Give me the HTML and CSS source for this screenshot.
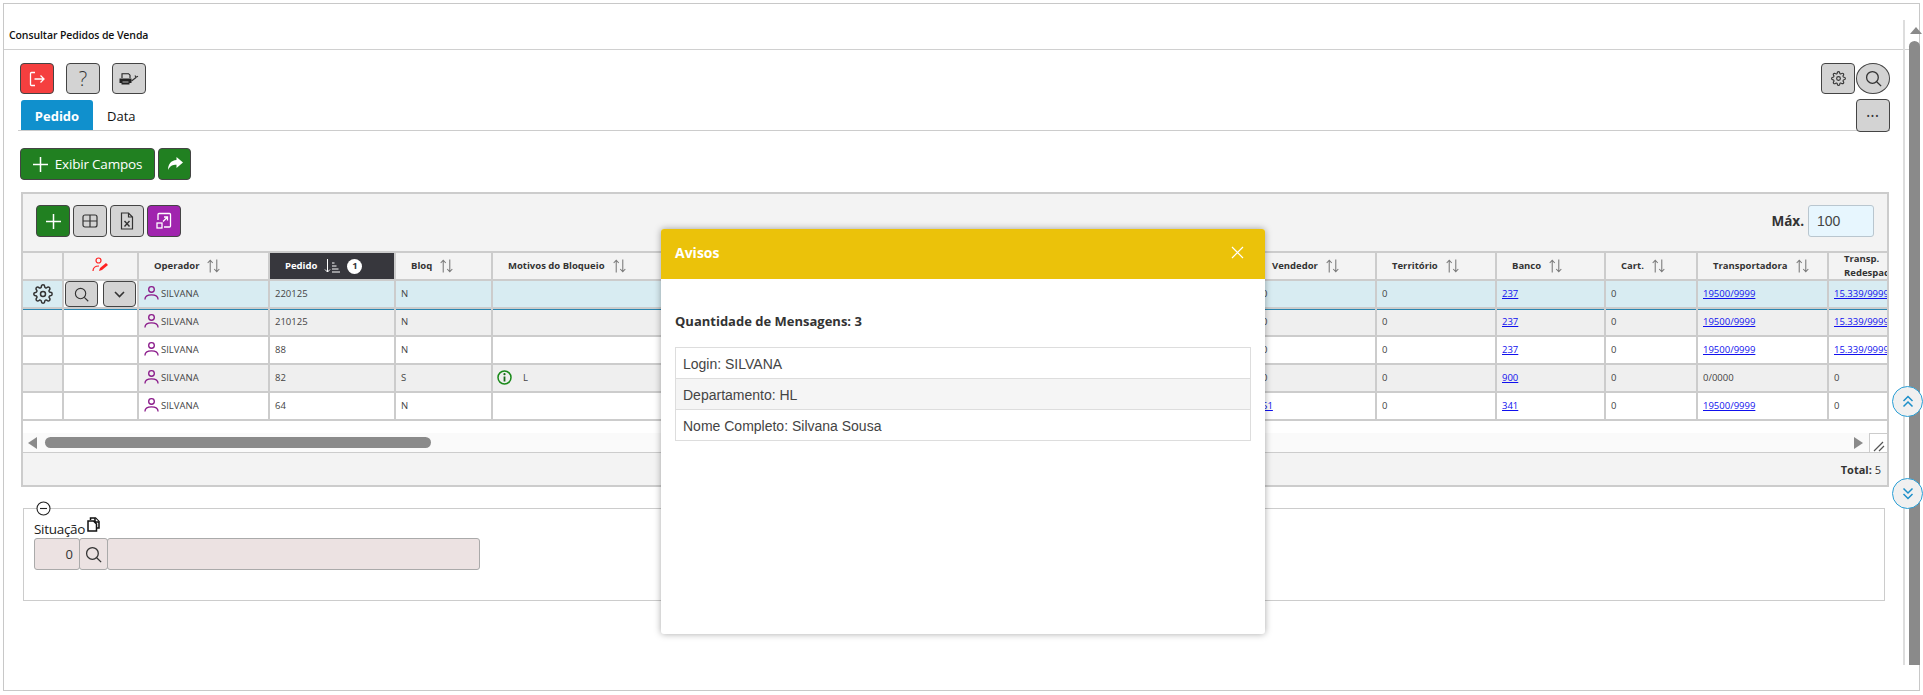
FILE: index.html
```html
<!DOCTYPE html>
<html lang="pt-BR">
<head>
<meta charset="utf-8">
<title>Consultar Pedidos de Venda</title>
<link rel="stylesheet" href="styles.css">
</head>
<body>
<svg class="defs" width="0" height="0" aria-hidden="true">
  <symbol id="i-sort" viewBox="0 0 16 16"><path d="M4.5 15V2M1.8 4.8 4.5 1.8l2.7 3M11.5 1v13M8.8 11.2l2.7 3 2.7-3" fill="none" stroke="currentColor" stroke-width="1.1"/></symbol>
  <symbol id="i-user" viewBox="0 0 16 16"><circle cx="8" cy="4.2" r="3" fill="none" stroke="currentColor" stroke-width="1.4"/><path d="M1 15c0-3.4 2.6-5 7-5s7 1.600 7 5" fill="none" stroke="currentColor" stroke-width="1.4"/></symbol>
  <symbol id="i-gear" viewBox="0 0 24 24"><g fill="none" stroke="currentColor" stroke-width="1.800"><circle cx="12" cy="12" r="3"/><path d="M19.4 15a1.65 1.65 0 0 0 .33 1.82l.06.06a2 2 0 0 1 0 2.83 2 2 0 0 1-2.83 0l-.06-.06a1.65 1.65 0 0 0-1.82-.33 1.65 1.65 0 0 0-1 1.51V21a2 2 0 0 1-2 2 2 2 0 0 1-2-2v-.09A1.65 1.65 0 0 0 9 19.4a1.65 1.65 0 0 0-1.82.33l-.06.06a2 2 0 0 1-2.83 0 2 2 0 0 1 0-2.83l.06-.06a1.65 1.65 0 0 0 .33-1.82 1.65 1.65 0 0 0-1.51-1H3a2 2 0 0 1-2-2 2 2 0 0 1 2-2h.09A1.65 1.65 0 0 0 4.6 9a1.65 1.65 0 0 0-.33-1.82l-.06-.06a2 2 0 0 1 0-2.83 2 2 0 0 1 2.83 0l.06.06a1.65 1.65 0 0 0 1.82.33H9a1.65 1.65 0 0 0 1-1.51V3a2 2 0 0 1 2-2 2 2 0 0 1 2 2v.09a1.65 1.65 0 0 0 1 1.51 1.65 1.65 0 0 0 1.82-.33l.06-.06a2 2 0 0 1 2.83 0 2 2 0 0 1 0 2.83l-.06.06a1.65 1.65 0 0 0-.33 1.82V9a1.65 1.65 0 0 0 1.51 1H21a2 2 0 0 1 2 2 2 2 0 0 1-2 2h-.09a1.65 1.65 0 0 0-1.51 1z"/></g></symbol>
  <symbol id="i-search" viewBox="0 0 16 16"><circle cx="7" cy="7" r="5.500" fill="none" stroke="currentColor" stroke-width="1.200"/><path d="m11 11 4.200 4.200" stroke="currentColor" stroke-width="1.200"/></symbol>
</svg>

<div class="frame">
  <header class="title-bar"><h1 class="title">Consultar Pedidos de Venda</h1></header>

  <div class="toolbar">
    <div class="btn-group">
      <button class="btn btn-red" type="button"><svg width="18" height="18" viewBox="0 0 18 18"><path d="M7 2.500H3.500a1 1 0 0 0-1 1v11a1 1 0 0 0 1 1H7M6.500 9H16M12.500 5.500 16 9l-3.500 3.500" fill="none" stroke="#fff" stroke-width="1.300"/></svg></button>
      <button class="btn" type="button"><span class="help">?</span></button>
      <button class="btn" type="button"><svg width="20" height="12" viewBox="0 0 20 12"><path d="M3 5V.7h6.500L11 2.200V5" fill="none" stroke="#222" stroke-width="1.100"/><path d="M.5 5.500h12V10H10.500v1.500h-8V10H.5z" fill="#222"/><path d="M3.500 9h6" stroke="#ddd" stroke-width=".8"/><path d="m12.500 8 4.500-3.500M16 2.500l1 1.800 2-1" fill="none" stroke="#333" stroke-width="1.200"/></svg></button>
    </div>
    <div class="btn-group btn-group-tight">
      <button class="btn btn-wide" type="button"><svg class="ic-dark" width="15" height="15"><use href="#i-gear"/></svg></button>
      <button class="btn btn-wide btn-round" type="button"><svg class="ic-dark" width="17" height="17"><use href="#i-search"/></svg></button>
    </div>
  </div>

  <div class="tabs">
    <span class="tab tab-active">Pedido</span>
    <span class="tab">Data</span>
    <button class="btn btn-wide btn-more" type="button">&#8226;&#8226;&#8226;</button>
  </div>

  <div class="actions">
    <button class="btn btn-green btn-show" type="button"><svg width="15" height="15" viewBox="0 0 15 15"><path d="M7.500 0v15M0 7.500h15" stroke="#fff" stroke-width="1.500"/></svg>Exibir Campos</button>
    <button class="btn btn-green btn-share" type="button"><svg width="16" height="14" viewBox="0 0 16 14"><path d="M9.500 0 16 5.500 9.500 11V7.800C5.500 7.800 3 9 1 13c0-5.500 3-9.700 8.500-10z" fill="#fff"/></svg></button>
  </div>

  <section class="panel">
    <div class="panel-tools">
      <div class="panel-btns">
        <button class="btn btn-green btn-tool" type="button"><svg width="15" height="15" viewBox="0 0 15 15"><path d="M7.500 0v15M0 7.500h15" stroke="#fff" stroke-width="1.500"/></svg></button>
        <button class="btn btn-tool" type="button"><svg width="16" height="14" viewBox="0 0 16 14"><rect x="1" y="1" width="14" height="12" rx="2" fill="none" stroke="#333" stroke-width="1.200"/><path d="M8 1v12M1 7h14" stroke="#333" stroke-width="1.200"/></svg></button>
        <button class="btn btn-tool" type="button"><svg width="14" height="18" viewBox="0 0 14 18"><path d="M1.500 1h7l4 4v12h-11zM8.500 1v4h4" fill="none" stroke="#333" stroke-width="1.200"/><path d="m4.500 9 5 5.500M9.500 9l-5 5.500" stroke="#333" stroke-width="1.400"/></svg></button>
        <button class="btn btn-purple btn-tool" type="button"><svg width="18" height="18" viewBox="0 0 18 18"><path d="M3 8V2.500A1 1 0 0 1 4 1.500h10.500a1 1 0 0 1 1 1V14a1 1 0 0 1-1 1H9" fill="none" stroke="#fff" stroke-width="1.300"/><rect x="2" y="11" width="5" height="5" fill="none" stroke="#fff" stroke-width="1.300"/><path d="m8 9.500 4.500-4.500M9 5h3.500v3.500" fill="none" stroke="#fff" stroke-width="1.300"/></svg></button>
      </div>
      <label class="max"><b class="max-label">Máx.</b><span class="max-input">100</span></label>
    </div>

    <div class="table-wrap">
      <table class="grid">
        <colgroup>
          <col class="c40"><col class="c75"><col class="c131"><col class="c126"><col class="c97"><col class="c200"><col class="c564"><col class="c120"><col class="c120"><col class="c109"><col class="c92"><col class="c131"><col class="c150">
        </colgroup>
        <thead>
          <tr>
            <th></th>
            <th class="th-edit"><svg width="17" height="15" viewBox="0 0 17 15"><circle cx="6.500" cy="3.500" r="2.500" fill="none" stroke="#f22" stroke-width="1.200"/><path d="M1 14c0-3 2-5 6-5" fill="none" stroke="#f22" stroke-width="1.200"/><path d="m7 14 1-3 6-5 2 2-6 5z" fill="#f22"/></svg></th>
            <th><span class="th-in">Operador <svg class="sort"><use href="#i-sort"/></svg></span></th>
            <th class="th-active"><span class="th-in">Pedido <svg class="sort-act" width="16" height="14" viewBox="0 0 16 14"><path d="M3.500 0v13M1 10.500l2.500 2.500L6 10.500M8 13h8M8 10h6.500M8 7h4.500M8 4h2.500" fill="none" stroke="#fff" stroke-width="1"/></svg><span class="badge">1</span></span></th>
            <th><span class="th-in">Bloq <svg class="sort"><use href="#i-sort"/></svg></span></th>
            <th><span class="th-in">Motivos do Bloqueio <svg class="sort"><use href="#i-sort"/></svg></span></th>
            <th></th>
            <th><span class="th-in">Vendedor <svg class="sort"><use href="#i-sort"/></svg></span></th>
            <th><span class="th-in">Território <svg class="sort"><use href="#i-sort"/></svg></span></th>
            <th><span class="th-in">Banco <svg class="sort"><use href="#i-sort"/></svg></span></th>
            <th><span class="th-in">Cart. <svg class="sort"><use href="#i-sort"/></svg></span></th>
            <th><span class="th-in">Transportadora <svg class="sort"><use href="#i-sort"/></svg></span></th>
            <th><span class="th-two">Transp.<br>Redespacho</span></th>
          </tr>
        </thead>
        <tbody>
          <tr class="row-sel">
            <td class="td-gear"><svg class="ic-dark" width="20" height="20"><use href="#i-gear"/></svg></td>
            <td class="td-btns"><button class="btn btn-row" type="button"><svg class="ic-dark" width="15" height="15"><use href="#i-search"/></svg></button><button class="btn btn-row" type="button"><svg width="11" height="7" viewBox="0 0 11 7"><path d="m1 1 4.500 4.500L10 1" fill="none" stroke="#333" stroke-width="1.600"/></svg></button></td>
            <td><span class="op"><svg class="ic-user" width="15" height="16"><use href="#i-user"/></svg>SILVANA</span></td>
            <td>220125</td><td>N</td><td></td><td></td><td>0</td><td>0</td><td><a href="#">237</a></td><td>0</td><td><a href="#">19500/9999</a></td><td><a href="#">15.339/9999</a></td>
          </tr>
          <tr class="row-alt row-after-sel">
            <td></td><td class="td-white"></td>
            <td><span class="op"><svg class="ic-user" width="15" height="16"><use href="#i-user"/></svg>SILVANA</span></td>
            <td>210125</td><td>N</td><td></td><td></td><td>0</td><td>0</td><td><a href="#">237</a></td><td>0</td><td><a href="#">19500/9999</a></td><td><a href="#">15.339/9999</a></td>
          </tr>
          <tr>
            <td></td><td class="td-white"></td>
            <td><span class="op"><svg class="ic-user" width="15" height="16"><use href="#i-user"/></svg>SILVANA</span></td>
            <td>88</td><td>N</td><td></td><td></td><td>0</td><td>0</td><td><a href="#">237</a></td><td>0</td><td><a href="#">19500/9999</a></td><td><a href="#">15.339/9999</a></td>
          </tr>
          <tr class="row-alt">
            <td></td><td class="td-white"></td>
            <td><span class="op"><svg class="ic-user" width="15" height="16"><use href="#i-user"/></svg>SILVANA</span></td>
            <td>82</td><td>S</td>
            <td class="td-motivo"><span class="motivo"><svg width="15" height="15" viewBox="0 0 15 15"><circle cx="7.500" cy="7.500" r="6.500" fill="none" stroke="#1a8a1a" stroke-width="1.500"/><path d="M7.500 6.500v5" stroke="#1a6a1a" stroke-width="1.800"/><circle cx="7.500" cy="4.200" r="1.100" fill="#1a6a1a"/></svg>L</span></td>
            <td></td><td>0</td><td>0</td><td><a href="#">900</a></td><td>0</td><td>0/0000</td><td>0</td>
          </tr>
          <tr>
            <td></td><td class="td-white"></td>
            <td><span class="op"><svg class="ic-user" width="15" height="16"><use href="#i-user"/></svg>SILVANA</span></td>
            <td>64</td><td>N</td><td></td><td></td><td><a href="#">51</a></td><td>0</td><td><a href="#">341</a></td><td>0</td><td><a href="#">19500/9999</a></td><td>0</td>
          </tr>
        </tbody>
      </table>
    </div>

    <div class="hscroll">
      <span class="arrow-left"></span>
      <span class="hthumb-track"><span class="hthumb"></span></span>
      <span class="arrow-right"></span>
      <span class="resize"><svg width="12" height="12" viewBox="0 0 12 12"><path d="M1 11 10 2M6 11l5-5" stroke="#555" stroke-width="1.200"/></svg></span>
    </div>
    <footer class="panel-foot"><b>Total:</b>&nbsp;5</footer>
  </section>

  <section class="filter">
    <svg class="filter-toggle" width="15" height="15" viewBox="0 0 15 15"><circle cx="7.500" cy="7.500" r="6.500" fill="#fff" stroke="#222" stroke-width="1.100"/><path d="M4 7.500h7" stroke="#222" stroke-width="1.100"/></svg>
    <div class="filter-label">Situação<svg width="13" height="15" viewBox="0 0 13 15"><path d="M3.500 3V1h5l3.500 3.500V11H9.500" fill="none" stroke="#111" stroke-width="1.500"/><path d="M1 4h5.500L9.500 7v7H1zM8 1v4h4" fill="#fff" stroke="#111" stroke-width="1.500"/></svg></div>
    <div class="filter-fields">
      <span class="field field-code">0</span>
      <span class="field field-search"><svg class="ic-dark" width="17" height="17"><use href="#i-search"/></svg></span>
      <span class="field field-desc"></span>
    </div>
  </section>

  <div class="vscroll"><span class="arrow-up"></span><span class="vthumb"></span></div>
</div>

<button class="round round-up" type="button"><svg width="12" height="13" viewBox="0 0 12 13"><path d="m1.500 6 4.500-4.500L10.500 6M1.500 11.500 6 7l4.500 4.500" fill="none" stroke="#1c8fc9" stroke-width="1.500"/></svg></button>
<button class="round round-down" type="button"><svg width="12" height="13" viewBox="0 0 12 13"><path d="M1.500 1.500 6 6l4.500-4.500M1.500 7 6 11.500 10.500 7" fill="none" stroke="#1c8fc9" stroke-width="1.500"/></svg></button>

<aside class="modal">
  <div class="modal-head"><span class="modal-title">Avisos</span><svg width="13" height="13" viewBox="0 0 13 13"><path d="m1 1 11 11M12 1 1 12" stroke="#fff" stroke-width="1.200"/></svg></div>
  <div class="modal-body">
    <p class="modal-count">Quantidade de Mensagens: 3</p>
    <ul class="msg-list">
      <li>Login: SILVANA</li>
      <li>Departamento: HL</li>
      <li>Nome Completo: Silvana Sousa</li>
    </ul>
  </div>
</aside>
</body>
</html>
```

FILE: styles.css
```css
* { box-sizing: border-box; }
html, body { margin: 0; padding: 0; height: 695px; overflow: hidden; background: #fff; }
body { font-family: "Open Sans", "Noto Sans", sans-serif; color: #222; position: relative; }
.defs { position: absolute; }
.frame { position: relative; margin: 3px 0 0 3px; width: 1917px; height: 688px; border: 1px solid #c8c8c8; }
.title-bar { height: 46px; border-bottom: 1px solid #d0d0d0; padding: 0 0 7px 5px; display: flex; align-items: flex-end; }
.title { margin: 0; font-size: 10.5px; line-height: 14px; font-weight: 600; color: #111; letter-spacing: -0.1px; }
.btn { display: inline-flex; align-items: center; justify-content: center; padding: 0; width: 34px; height: 31px; border: 1px solid #444; border-radius: 4px; background: #d3d3d3; color: #333; font-family: inherit; }
.toolbar { display: flex; justify-content: space-between; margin: 13px 29px 0 16px; height: 31px; }
.btn-group { display: flex; gap: 12px; }
.btn-group-tight { gap: 1px; }
.btn-red { background: #f53f3f; }
.help { font-size: 20px; font-weight: 300; color: #333; }
.btn-wide { width: 34px; }
.btn-round { border-radius: 50%; }
.ic-dark { color: #333; }
.tabs { display: flex; align-items: stretch; height: 32px; margin: 5px 29px 0 14px; border-bottom: 1px solid #ccc; padding-left: 3px; }
.tab { display: flex; align-items: center; padding: 2px 14px 0; font-size: 13px; color: #111; }
.tab-active { width: 72px; justify-content: center; padding: 2px 0 0; margin-top: 1px; background: #1090cd; color: #fff; font-weight: 700; border-radius: 3px 3px 0 0; }
.btn-more { margin-left: auto; height: 33px; font-size: 9px; letter-spacing: 1px; color: #333; }
.actions { display: flex; gap: 3px; margin: 17px 0 0 16px; height: 32px; }
.btn-green { background: #218021; color: #fff; }
.btn-show { width: 135px; height: 32px; gap: 7px; font-size: 13.5px; letter-spacing: -0.2px; }
.btn-share { width: 33px; height: 32px; }
.panel { margin: 12px 0 0 17px; width: 1868px; height: 295px; border: 2px solid #ccc; background: #f3f3f3; display: flex; flex-direction: column; }
.panel-tools { height: 57px; padding: 11px 13px; display: flex; justify-content: space-between; align-items: flex-start; }
.panel-btns { display: flex; gap: 3px; }
.btn-tool { height: 32px; }
.btn-purple { background: #a024ae; }
.max { display: flex; align-items: center; gap: 4px; }
.max-label { font-size: 13.5px; color: #333; font-family: "Open Sans", sans-serif; }
.max-input { width: 66px; height: 32px; border: 1px solid #b9c6cf; border-radius: 3px; background: #e7f6fe; display: flex; align-items: center; padding-left: 8px; font: 14px "Liberation Sans", sans-serif; color: #444; }
.table-wrap { height: 182px; background: #fff; overflow: hidden; }
.grid { border-collapse: collapse; table-layout: fixed; width: 1955px; font-size: 9.5px; color: #444; }
.c40 { width: 40px; } .c75 { width: 75px; } .c131 { width: 131px; } .c126 { width: 126px; } .c97 { width: 97px; } .c200 { width: 200px; } .c564 { width: 564px; } .c120 { width: 120px; } .c109 { width: 109px; } .c92 { width: 92px; } .c150 { width: 150px; }
.grid th, .grid td { border: 2px solid #ccc; white-space: nowrap; overflow: hidden; }
.grid td { height: 28px; padding: 0 5px 2px; vertical-align: middle; }
.grid th { height: 28px; padding: 0 0 0 15px; background: #f3f3f3; font-size: 9.5px; font-weight: 700; color: #333; text-align: left; line-height: 14px; }
.grid th:first-child, .grid td:first-child { border-left: 0; }
.grid th.th-edit { padding: 0; text-align: center; }
.grid a { color: #1010ee; text-decoration: underline; }
.th-in { display: flex; align-items: center; gap: 7px; height: 16px; }
.th-two { display: block; margin: -3px 0; }
.sort { width: 15px; height: 16px; color: #777; flex: none; }
.grid .th-active { background: #37373d; color: #fff; }
.badge { width: 15px; height: 15px; border-radius: 50%; background: #fff; color: #37373d; font-size: 9.5px; display: inline-flex; align-items: center; justify-content: center; }
.row-sel td { background: #d8ecf2; }
.row-alt td { background: #efefef; }
.grid td.td-white, .grid td.td-btns { background: #fff; }
.grid td.td-btns { padding: 0 0 0 1px; }
.grid td.td-gear { text-align: center; padding: 0; }
.td-gear svg { display: block; margin: 0 auto; }
.td-btns { font-size: 0; }
.btn-row { width: 33px; height: 26px; margin: 0; vertical-align: middle; }
.btn-row + .btn-row { margin-left: 5px; }
.row-after-sel td { box-shadow: inset 0 1px 0 #2a86b0; }
.op { display: inline-flex; align-items: center; gap: 2px; vertical-align: middle; }
.ic-user { color: #8a1a8a; }
.grid td.td-motivo { padding-left: 4px; }
.motivo { display: inline-flex; align-items: center; gap: 11px; vertical-align: middle; }
.hscroll { height: 19px; background: #fafafa; display: flex; align-items: center; padding-left: 5px; position: relative; }
.arrow-left { width: 0; height: 0; border: 6px solid transparent; border-right: 9px solid #8a8a8a; border-left: 0; }
.hthumb-track { flex: 1; padding-left: 8px; }
.hthumb { display: block; width: 386px; height: 11px; border-radius: 6px; background: #8a8a8a; }
.arrow-right { width: 0; height: 0; border: 6px solid transparent; border-left: 9px solid #8a8a8a; border-right: 0; margin-right: 6px; }
.resize { width: 18px; height: 19px; border: 1px solid #ccc; border-width: 1px 0 0 1px; background: #fff; display: flex; align-items: flex-end; justify-content: center; }
.panel-foot { flex: 1; border-top: 1px solid #ccc; display: flex; align-items: center; justify-content: flex-end; padding-right: 6px; font-size: 11px; color: #333; }
.filter { margin: 21px 0 0 19px; width: 1862px; height: 93px; border: 1px solid #ccc; padding: 0 10px; }
.filter-toggle { display: block; margin: -8px 0 0 2px; }
.filter-label { display: flex; align-items: flex-start; height: 19px; margin-top: 3px; font-size: 13.5px; line-height: 21px; color: #222; letter-spacing: -0.3px; }
.filter-label svg { margin: -2px 0 0 2px; }
.filter-fields { display: flex; height: 32px; }
.field { height: 32px; border: 1px solid #aaa; border-radius: 3px; background: #ece2e2; display: flex; align-items: center; }
.field-code { width: 46px; justify-content: flex-end; padding-right: 6px; font-size: 13px; color: #333; }
.field-search { width: 29px; justify-content: center; margin-left: -1px; }
.field-desc { width: 373px; margin-left: -1px; }
.vscroll { position: absolute; left: 1899px; top: 16px; width: 17px; height: 645px; border-left: 2px solid #ddd; }
.arrow-up { position: absolute; left: 5px; top: 7px; width: 0; height: 0; border: 6px solid transparent; border-bottom: 7px solid #8a8a8a; border-top: 0; }
.vthumb { position: absolute; left: 4px; top: 21px; bottom: 0; width: 11px; background: #8a8a8a; border-radius: 6px 6px 0 0; }
.round { position: absolute; left: 1892px; width: 31px; height: 31px; border-radius: 50%; border: 1.500px solid #2a9fd6; background: #f0f0f0; padding: 0; display: flex; align-items: center; justify-content: center; }
.round-up { top: 386px; }
.round-down { top: 478px; }
.modal { position: absolute; left: 661px; top: 229px; width: 604px; height: 405px; background: #fff; border-radius: 3px; box-shadow: 0 0 7px rgba(0, 0, 0, .35); }
.modal-head { height: 50px; background: #ebc20a; border-radius: 3px 3px 0 0; display: flex; align-items: center; justify-content: space-between; padding: 0 21px 3px 14px; }
.modal-title { color: #fff; font-size: 14px; font-weight: 700; }
.modal-body { padding: 0 14px; }
.modal-count { margin: 33px 0 0; font-size: 13px; line-height: 18px; font-weight: 700; color: #333; }
.msg-list { list-style: none; margin: 17px 0 0; padding: 0; border: 1px solid #ddd; font: 14px "Liberation Sans", sans-serif; color: #444; }
.msg-list li { height: 31px; padding: 1px 0 0 7px; display: flex; align-items: center; border-bottom: 1px solid #ddd; }
.msg-list li:last-child { border-bottom: 0; height: 30px; }
.msg-list li:nth-child(2) { background: #f5f5f5; }
```
